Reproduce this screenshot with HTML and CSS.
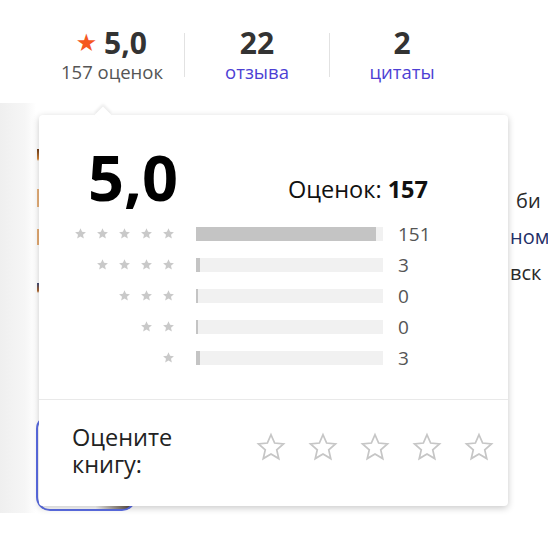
FILE: index.html
```html
<!DOCTYPE html>
<html lang="ru">
<head>
    <meta charset="UTF-8">
    <title>Рейтинг книги</title>
    <link rel="stylesheet" href="styles.css">
</head>
<body>
    <div class="stats">
        <div class="stat">
            <div class="stat-num"><span class="star-mark">★</span>5,0</div>
            <div class="stat-label">157 оценок</div>
        </div>
        <span class="sep"></span>
        <div class="stat">
            <div class="stat-num">22</div>
            <a class="stat-link" href="#">отзыва</a>
        </div>
        <span class="sep"></span>
        <div class="stat">
            <div class="stat-num">2</div>
            <a class="stat-link" href="#">цитаты</a>
        </div>
    </div>

    <div class="page">
        <div class="shade"></div>
        <div class="side">
            <div class="cover"></div>
            <div class="dots">⋮</div>
            <div class="buy"></div>
        </div>
        <div class="desc">
            <p>би</p>
            <p class="desc-alt">ном</p>
            <p>вск</p>
        </div>

        <!-- rating popover -->
        <div class="popup">
            <div class="popup-head">
                <div class="big-rate">5,0</div>
                <div class="total">Оценок: <b>157</b></div>
            </div>

            <div class="rows" id="rows"></div>

            <div class="popup-foot">
                <div class="ask">Оцените<br>книгу:</div>
                <div class="rate-stars" id="rateStars"></div>
            </div>
        </div>
    </div>

    <script>
        const STAR = 'M12 2.2l2.9 6.6 7.1.7-5.4 4.8 1.6 7-6.2-3.7-6.2 3.7 1.6-7L2 9.5l7.1-.7z';
        const counts = [151, 3, 0, 0, 3];
        const total = 157;

        const rows = document.getElementById('rows');
        counts.forEach((n, i) => {
            const stars = 5 - i;
            let icons = '';
            for (let s = 0; s < stars; s++) {
                icons += `<svg class="mini-star" viewBox="0 0 24 24"><path d="${STAR}"/></svg>`;
            }
            const pct = (n / total * 100).toFixed(1);
            rows.insertAdjacentHTML('beforeend', `
                <div class="row">
                    <div class="row-stars">${icons}</div>
                    <div class="bar"><div class="bar-fill" style="width: ${pct}%"></div></div>
                    <div class="row-count">${n}</div>
                </div>
            `);
        });

        const rate = document.getElementById('rateStars');
        for (let s = 0; s < 5; s++) {
            rate.insertAdjacentHTML('beforeend',
                `<svg class="rate-star" viewBox="0 0 24 24"><path d="${STAR}"/></svg>`);
        }
    </script>
</body>
</html>
```

FILE: styles.css
```css
body {
    margin: 0;
    width: 548px;
    height: 542px;
    overflow: hidden;
    background: #fff;
    font-family: 'Open Sans', 'Noto Sans', sans-serif;
    color: #222;
}

/* top counters */
.stats {
    display: flex;
    align-items: center;
    padding: 26px 0 0 40px;
}
.stat {
    width: 144px;
    text-align: center;
}
.sep {
    width: 1px;
    height: 44px;
    background: #e2e2e2;
}
.stat-num {
    font-size: 30px;
    line-height: 32px;
    font-weight: 700;
    color: #333;
}
.star-mark {
    color: #f5581f;
    font-size: 21px;
    vertical-align: 4px;
    margin-right: 8px;
}
.stat-label,
.stat-link {
    display: block;
    margin-top: 2px;
    font-size: 18.5px;
    line-height: 22px;
    color: #555;
}
.stat-link {
    color: #4d3fd4;
    text-decoration: none;
}

/* page behind the popover */
.page {
    position: relative;
    display: flex;
    height: 460px;
}
.shade {
    flex-shrink: 0;
    width: 36px;
    margin: 20px 0 30px;
    background: linear-gradient(to right, #efefef, #f6f6f6 70%, #fff);
}
.side {
    flex-shrink: 0;
    width: 104px;
    padding-top: 62px;
    display: flex;
    flex-direction: column;
    align-items: flex-start;
}
.cover {
    width: 100px;
    height: 150px;
    margin-left: 1px;
    background: linear-gradient(#fff 0, #fff 4px, #6b3a18 4px, #d98a3c 14px, #fff 16px,
        #fff 44px, #e9b27c 44px, #e9b27c 62px, #fff 62px,
        #fff 84px, #e7ad75 84px, #e7ad75 100px, #fff 100px,
        #fff 138px, #3d4a7a 138px, #b56a2c 146px, #fff 148px);
}
.dots {
    margin: 26px 0 0 -1px;
    font-size: 18px;
    line-height: 18px;
    color: #6a7391;
}
.buy {
    width: 100px;
    height: 96px;
    margin-top: 76px;
    border: 2px solid #5b6de4;
    border-radius: 14px;
    background: linear-gradient(to right, #fff 60%, #4a3a2a);
    box-sizing: border-box;
}
.desc {
    flex-shrink: 0;
    padding: 100px 0 0 370px;
    font-size: 20px;
    color: #2a2a2a;
    white-space: nowrap;
}
.desc p {
    margin: 0;
    line-height: 36px;
}
.desc p:first-child {
    padding-left: 6px;
}
.desc-alt {
    color: #1f3068;
}

/* popover */
.popup {
    position: absolute;
    left: 39px;
    top: 32px;
    width: 469px;
    height: 391px;
    background: #fff;
    border-radius: 4px;
    box-shadow: 0 2px 7px rgba(0, 0, 0, 0.22);
}
.popup::before {
    content: '';
    position: absolute;
    left: 58px;
    top: -6px;
    width: 12px;
    height: 12px;
    background: #fff;
    transform: rotate(45deg);
    box-shadow: -2px -2px 3px rgba(0, 0, 0, 0.08);
}
.popup-head {
    position: relative;
    display: flex;
    justify-content: space-between;
    align-items: baseline;
    padding: 31px 80px 0 49px;
}
.big-rate {
    font-size: 63px;
    line-height: 62px;
    font-weight: 700;
    color: #000;
}
.total {
    position: relative;
    top: -3px;
    font-size: 23.5px;
    color: #111;
}
.total b {
    font-weight: 700;
}

.rows {
    margin-top: 10px;
}
.row {
    display: grid;
    grid-template-columns: 136px 187px auto;
    column-gap: 21px;
    align-items: center;
    height: 31px;
}
.row-stars {
    display: flex;
    justify-content: flex-end;
    gap: 9px;
}
.mini-star {
    width: 13px;
    height: 13px;
    fill: #c9c9c9;
}
.bar {
    height: 14px;
    background: #f1f1f1;
}
.bar-fill {
    height: 100%;
    min-width: 2px;
    background: #c4c4c4;
}
.row-count {
    margin-left: -6px;
    font-size: 19px;
    color: #555;
}

.popup-foot {
    display: flex;
    align-items: center;
    justify-content: space-between;
    height: 106px;
    margin-top: 26px;
    padding: 0 14px 0 33px;
    border-top: 1px solid #e9e9e9;
}
.ask {
    margin-bottom: 4px;
    font-size: 23.5px;
    line-height: 27px;
    color: #222;
}
.rate-stars {
    display: flex;
    gap: 22px;
    margin-bottom: 12px;
}
.rate-star {
    width: 30px;
    height: 30px;
    fill: none;
    stroke: #c6c6c6;
    stroke-width: 1.4;
    stroke-linejoin: miter;
}
```
